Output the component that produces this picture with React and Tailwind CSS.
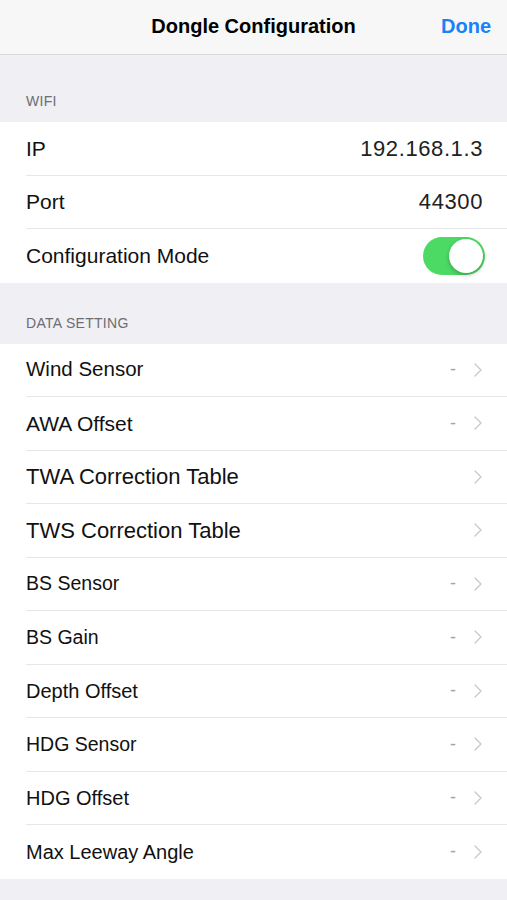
import { ChevronRight } from 'lucide-react';

const dataRows = [
  { label: 'Wind Sensor', value: '-', size: 'text-[20.5px]' },
  { label: 'AWA Offset', value: '-', size: 'text-[21px]' },
  { label: 'TWA Correction Table', value: '', size: 'text-[22px]' },
  { label: 'TWS Correction Table', value: '', size: 'text-[22px]' },
  { label: 'BS Sensor', value: '-', size: 'text-[19.5px]' },
  { label: 'BS Gain', value: '-', size: 'text-[19.5px]' },
  { label: 'Depth Offset', value: '-', size: 'text-[20px]' },
  { label: 'HDG Sensor', value: '-', size: 'text-[19.5px]' },
  { label: 'HDG Offset', value: '-', size: 'text-[20px]' },
  { label: 'Max Leeway Angle', value: '-', size: 'text-[20px]' },
];

function Row({ children, last }) {
  return (
    <div className="pl-[26px]">
      <div className={`h-[53.5px] flex items-center pr-[22px] ${last ? '' : 'border-b border-[#e6e6e9]'}`}>
        {children}
      </div>
    </div>
  );
}

function SectionHeader({ title, h }) {
  return (
    <div className={`${h} flex items-end pb-[10px] px-[26px] text-[14px] text-[#6d6d72] tracking-[0.3px]`}>
      {title}
    </div>
  );
}

export default function App() {
  return (
    <div className="w-[507px] h-[900px] bg-[#efeff4] overflow-hidden" style={{ fontFamily: '"Liberation Sans", Arial, sans-serif' }}>
      {/* Nav bar */}
      <div className="h-[55px] bg-[#f7f7f7] border-b border-[#d8d8dc] relative flex items-center justify-center">
        <span className="text-[20px] font-bold text-black pb-[2px]">Dongle Configuration</span>
        <span className="absolute right-[16px] top-1/2 -translate-y-1/2 text-[20px] font-bold text-[#1a82f7] pb-[2px]">Done</span>
      </div>

      <SectionHeader title="WIFI" h="h-[67px]" />
      <div className="bg-white text-[21px] text-[#111]">
        <Row>
          <span className="flex-1">IP</span>
          <span className="mr-[2px] text-[22px] tracking-[0.6px] text-[#222]">192.168.1.3</span>
        </Row>
        <Row>
          <span className="flex-1">Port</span>
          <span className="mr-[2px] text-[22px] tracking-[0.6px] text-[#222]">44300</span>
        </Row>
        <Row last>
          <span className="flex-1">Configuration Mode</span>
          <div className="w-[62px] h-[38px] rounded-full bg-[#4cd964] relative">
            <div className="absolute right-[2px] top-[2px] w-[34px] h-[34px] rounded-full bg-white shadow-[0_2px_4px_rgba(0,0,0,0.25)]" />
          </div>
        </Row>
      </div>

      <SectionHeader title="DATA SETTING" h="h-[61px]" />
      <div className="bg-white text-[#111]">
        {dataRows.map((r, i) => (
          <Row key={r.label} last={i === dataRows.length - 1}>
            <span className={`flex-1 ${r.size}`}>{r.label}</span>
            {r.value && <span className="text-[#a3a3a8] text-[18px] mr-[10px]">{r.value}</span>}
            <ChevronRight size={24} strokeWidth={1.3} className="text-[#c7c7cc] -mr-[5px]" />
          </Row>
        ))}
      </div>
    </div>
  );
}
